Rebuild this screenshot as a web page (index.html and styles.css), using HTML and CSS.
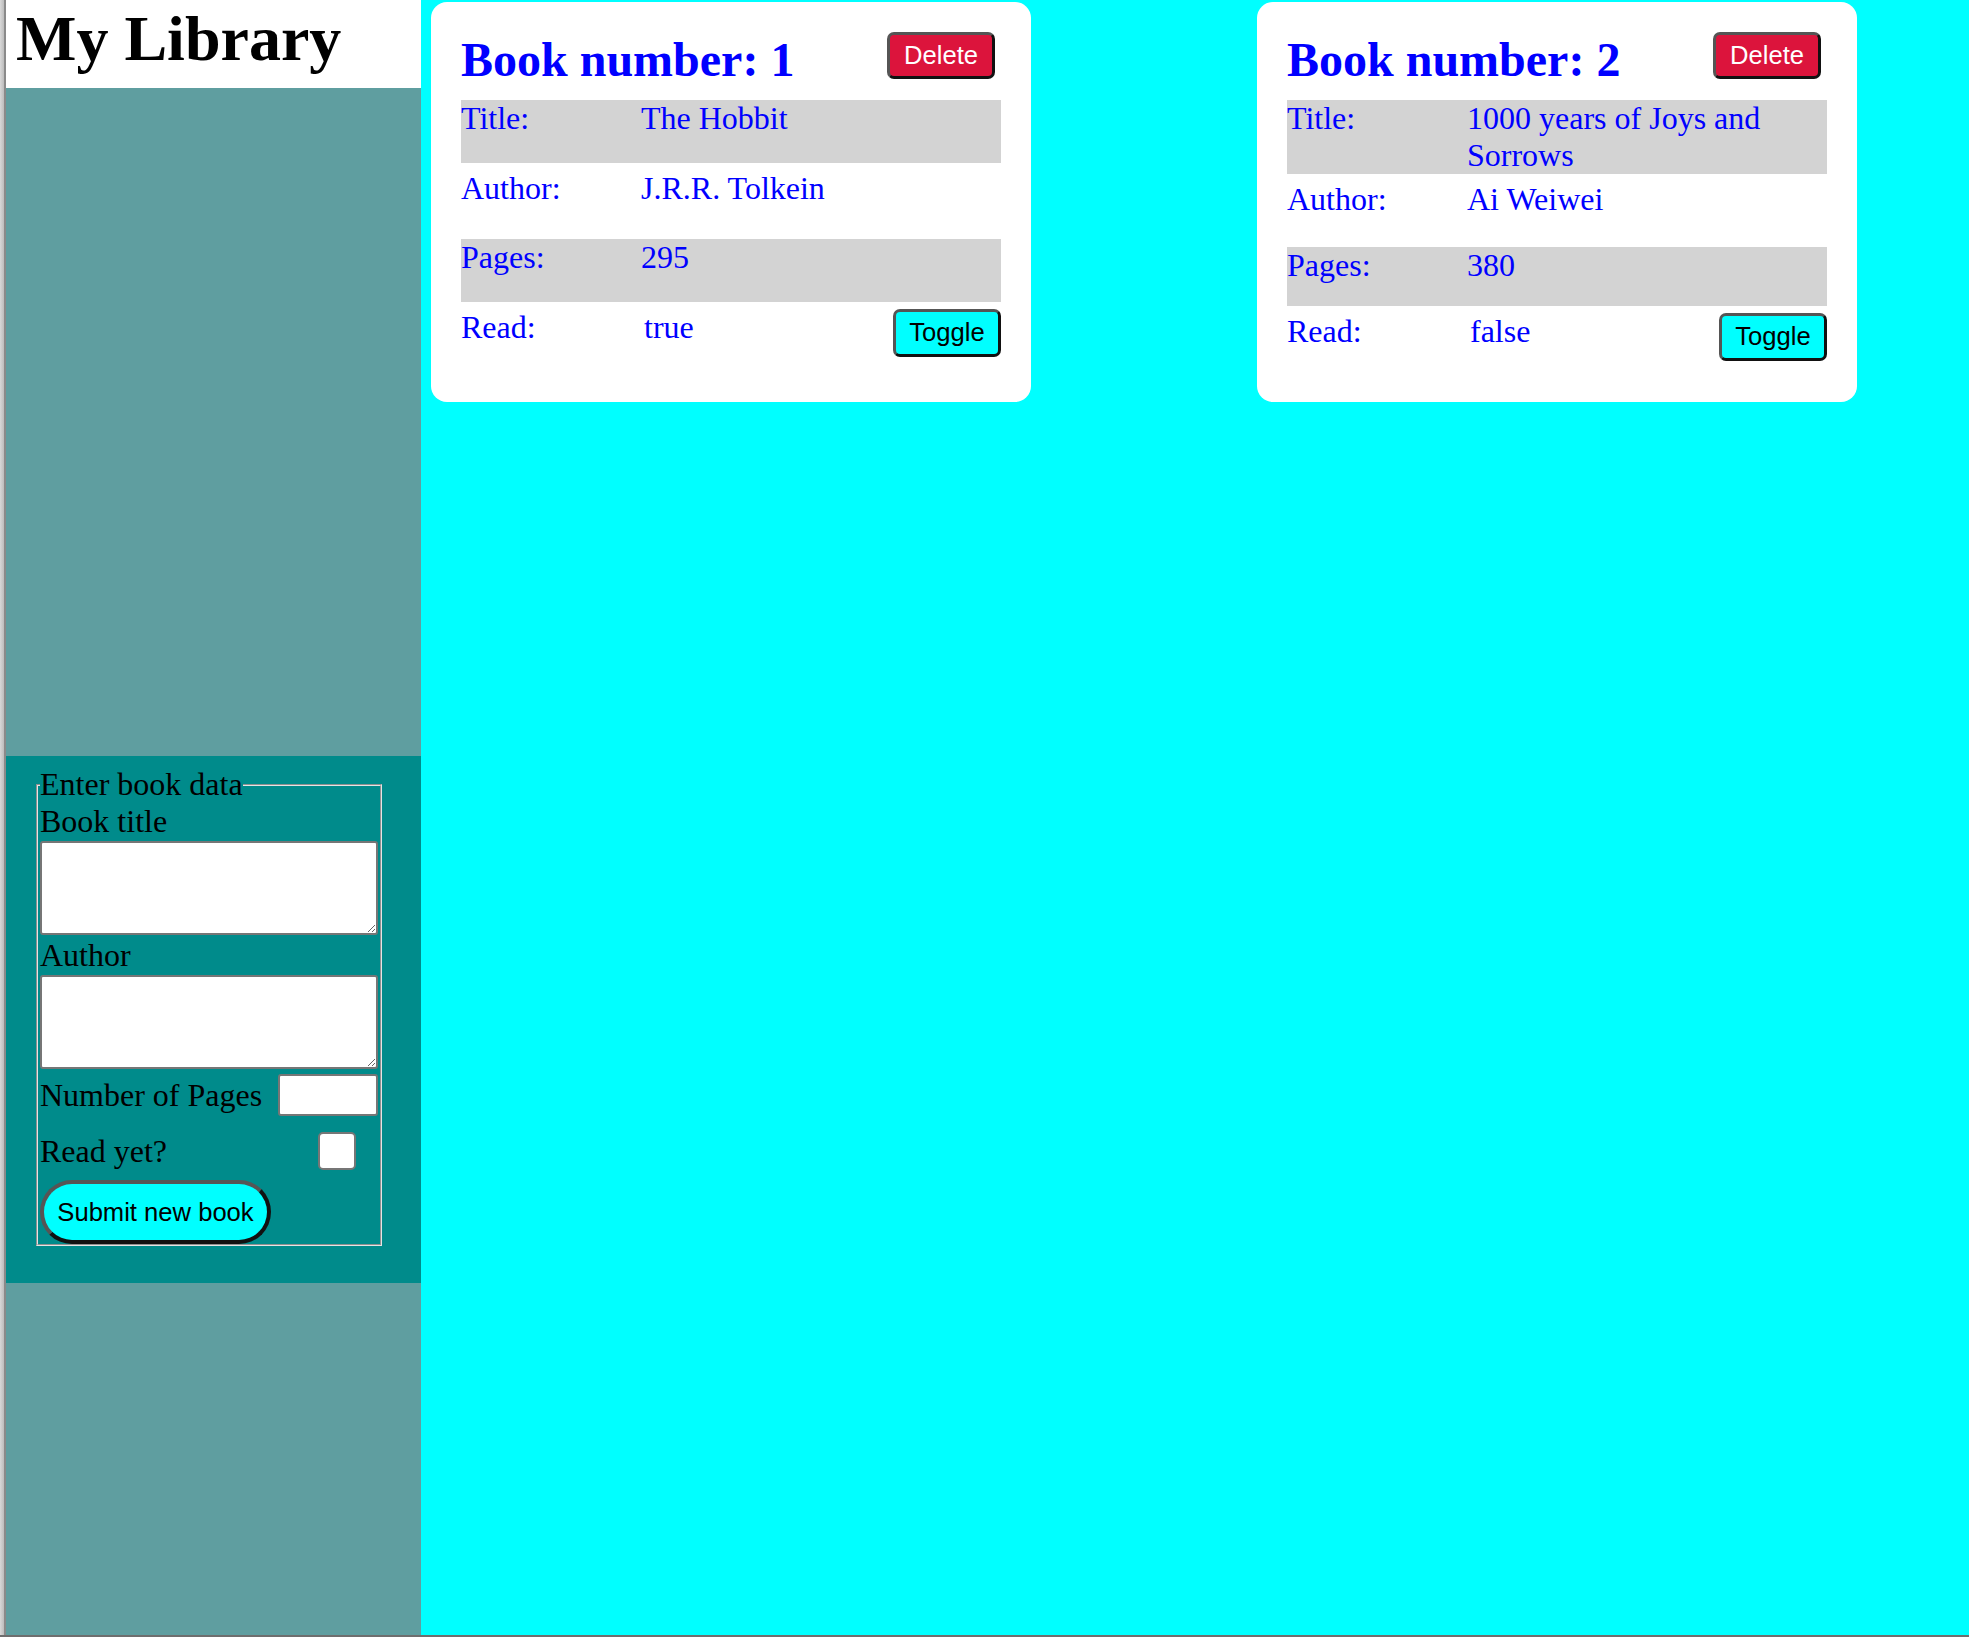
FILE: index.html
```html
<!DOCTYPE html>
<html lang="en">
<head>
<meta charset="utf-8">
<title>My Library</title>
<link rel="stylesheet" href="styles.css">
</head>
<body>
<div class="page">
  <aside class="sidebar">
    <header class="brand"><h1>My Library</h1></header>
    <section class="form-section">
      <form class="book-form">
        <fieldset>
          <legend>Enter book data</legend>
          <label for="title">Book title</label>
          <textarea id="title"></textarea>
          <label for="author">Author</label>
          <textarea id="author"></textarea>
          <div class="field-row pages-row">
            <label for="pages">Number of Pages</label>
            <input id="pages" class="num" type="text">
          </div>
          <div class="field-row read-row">
            <label for="read">Read yet?</label>
            <input id="read" class="check" type="checkbox">
          </div>
          <button type="button" class="submit">Submit new book</button>
        </fieldset>
      </form>
    </section>
  </aside>
  <main class="library">
    <article class="card">
      <div class="card-head">
        <h2>Book number: 1</h2>
        <button type="button" class="btn delete">Delete</button>
      </div>
      <div class="row shaded"><span>Title:</span><span>The Hobbit</span></div>
      <div class="row"><span>Author:</span><span>J.R.R. Tolkein</span></div>
      <div class="row shaded"><span>Pages:</span><span>295</span></div>
      <div class="row"><span>Read:</span><span class="read-cell"><span class="read-val">true</span><button type="button" class="btn toggle">Toggle</button></span></div>
    </article>
    <article class="card">
      <div class="card-head">
        <h2>Book number: 2</h2>
        <button type="button" class="btn delete">Delete</button>
      </div>
      <div class="row shaded"><span>Title:</span><span>1000 years of Joys and Sorrows</span></div>
      <div class="row"><span>Author:</span><span>Ai Weiwei</span></div>
      <div class="row shaded"><span>Pages:</span><span>380</span></div>
      <div class="row"><span>Read:</span><span class="read-cell"><span class="read-val">false</span><button type="button" class="btn toggle">Toggle</button></span></div>
    </article>
  </main>
</div>
</body>
</html>
```
FILE: styles.css
```css
html, body {
  margin: 0;
  padding: 0;
}

body {
  font-family: "Liberation Serif", "Times New Roman", serif;
  background: #00ffff;
}

.page {
  display: flex;
  height: 100vh;
  box-sizing: border-box;
  padding-left: 6px;
  border-bottom: 2px solid #6e6e6e;
  background: linear-gradient(to right, #d8d8d8 0, #bcbcbc 4px, #8a8a8a 4px, #8a8a8a 6px, #00ffff 6px);
}

/* ---------- sidebar ---------- */
.sidebar {
  flex: none;
  width: 415px;
  background: #5f9ea0;
  display: flex;
  flex-direction: column;
}

.brand {
  background: #ffffff;
  height: 88px;
  box-sizing: border-box;
  padding: 2px 10px 0;
}

.brand h1 {
  margin: 0;
  font-size: 64px;
  font-weight: 700;
  line-height: normal;
  color: #000;
}

.form-section {
  margin-top: 668px;
  background: #008b8b;
  padding: 10px 39px 37px 30px;
  font-size: 32px;
  color: #000;
}

.book-form fieldset {
  margin: 0;
  padding: 0 2px 0 2px;
  min-width: 0;
  border: 2px groove #e4e4e4;
}

.book-form legend {
  padding: 0;
}

.book-form label {
  display: block;
  line-height: normal;
}

.book-form textarea {
  display: block;
  width: 100%;
  height: 94px;
  box-sizing: border-box;
  margin: 1px 0 2px;
  border: 2px solid #767676;
  border-radius: 3px;
  background: #fff;
}

.field-row {
  display: flex;
  justify-content: space-between;
  align-items: center;
}

.pages-row {
  margin-top: 5px;
  height: 42px;
}

.read-row {
  margin-top: 15px;
  height: 40px;
}

.num {
  width: 100px;
  height: 42px;
  box-sizing: border-box;
  margin: 0;
  border: 2px solid #767676;
  border-radius: 3px;
  background: #fff;
}

.check {
  appearance: none;
  -webkit-appearance: none;
  width: 38px;
  height: 38px;
  box-sizing: border-box;
  margin: 0 22px 0 0;
  border: 2px solid #767676;
  border-radius: 5px;
  background: #fff;
}

.submit {
  display: block;
  margin-top: 9px;
  width: 231px;
  height: 64px;
  box-sizing: border-box;
  padding: 0;
  border: 4px solid;
  border-color: #555555 #111111 #111111 #555555;
  border-radius: 32px;
  background: #00ffff;
  color: #000;
  font-family: "Liberation Sans", Arial, sans-serif;
  font-size: 25.6px;
}

/* ---------- library ---------- */
.library {
  flex: 1;
  background: #00ffff;
  display: grid;
  grid-template-columns: repeat(2, 600px);
  column-gap: 226px;
  align-content: start;
  padding: 2px 10px;
}

.card {
  height: 400px;
  box-sizing: border-box;
  padding: 30px;
  background: #ffffff;
  border-radius: 16px;
  display: grid;
  grid-template-rows: auto repeat(4, 1fr);
  row-gap: 6.5px;
  color: #0000ff;
}

.card-head {
  display: flex;
  justify-content: space-between;
  align-items: flex-start;
  margin-bottom: 6.5px;
}

.card-head h2 {
  margin: 0;
  font-size: 48px;
  font-weight: 700;
  line-height: normal;
}

.row {
  display: grid;
  grid-template-columns: 1fr 2fr;
  align-items: start;
  font-size: 32px;
  line-height: normal;
}

.row.shaded {
  background: #d3d3d3;
}

.read-cell {
  display: flex;
  justify-content: space-between;
  align-items: flex-start;
}

.read-val {
  padding-left: 3px;
}

.btn {
  width: 108px;
  height: 47px;
  box-sizing: border-box;
  padding: 0;
  border: 3px solid;
  border-color: #555555 #111111 #111111 #555555;
  border-radius: 7px;
  font-family: "Liberation Sans", Arial, sans-serif;
  font-size: 25.6px;
  line-height: normal;
}

.delete {
  margin-right: 6px;
  background: #dc143c;
  color: #ffffff;
}

.toggle {
  height: 48px;
  background: #00ffff;
  color: #000000;
}
```
